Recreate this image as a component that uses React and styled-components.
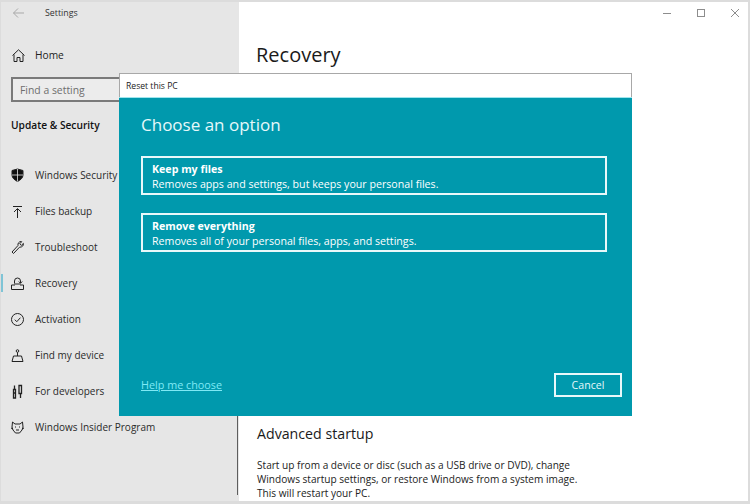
import React from "react";
import styled, { createGlobalStyle } from "styled-components";

const Global = createGlobalStyle`
  html, body { margin: 0; padding: 0; background: #fff; }
  body { font-family: "Open Sans", "Noto Sans", sans-serif; color: #1a1a1a; }
  #root { width: 750px; height: 504px; }
`;

const Frame = styled.div`
  position: relative;
  width: 750px;
  height: 504px;
  box-sizing: border-box;
  border: solid #dcdcdc;
  border-width: 2px 2px 3px 1px;
  display: flex;
  overflow: hidden;
  background: #fff;
`;
const Sidebar = styled.aside`
  position: relative;
  width: 238px;
  background: #e6e6e6;
  display: flex;
  flex-direction: column;
  flex: none;
`;
const TitleRow = styled.div`
  height: 21px;
  display: flex;
  align-items: center;
  padding-left: 11px;
  gap: 20px;
  font-size: 8.8px;
  color: #333;
`;
const BackIcon = styled.svg`
  width: 13px;
  height: 12px;
  fill: none;
  stroke: #a9a9a9;
  stroke-width: 1;
`;
const HomeRow = styled.div`
  margin-top: 21px;
  height: 22px;
  display: flex;
  align-items: center;
  padding-left: 10px;
  gap: 9px;
  font-size: 10.2px;
  color: #222;
`;
const Search = styled.div`
  margin: 11px 0 0 10px;
  width: 170px;
  height: 25px;
  box-sizing: border-box;
  border: 2px solid #7a7a7a;
  background: #ececec;
  padding-left: 7px;
  display: flex;
  align-items: center;
  font-size: 10.4px;
  color: #6e6e6e;
`;
const Section = styled.div`
  margin: 14px 0 0 10px;
  font-size: 10.2px;
  font-weight: 600;
  color: #111;
  line-height: 18px;
`;
const Nav = styled.nav`
  margin-top: 23px;
  display: flex;
  flex-direction: column;
`;
const NavRow = styled.div`
  position: relative;
  height: 36px;
  display: flex;
  align-items: center;
  padding-left: 9px;
  gap: 10px;
  font-size: 10px;
  color: #2a2a2a;
  white-space: nowrap;
  ${(p) =>
    p.$active &&
    `&::before { content: ""; position: absolute; left: 0; top: 9px; width: 2px; height: 18px; background: #7fc4d6; }`}
`;
const Icon = styled.svg`
  width: 15px;
  height: 15px;
  flex: none;
  fill: none;
  stroke: #222;
  stroke-width: 1;
`;
const ScrollLine = styled.div`
  position: absolute;
  right: 1px;
  top: 74px;
  bottom: 6px;
  width: 1px;
  background: #5e5e5e;
`;
const Main = styled.main`
  flex: 1;
  display: flex;
  flex-direction: column;
  padding-left: 18px;
  min-width: 0;
`;
const WinControls = styled.div`
  height: 22px;
  display: flex;
  align-items: center;
  justify-content: flex-end;
  gap: 24px;
  padding-right: 8px;
`;
const CtlIcon = styled.svg`
  width: 10px;
  height: 10px;
  fill: none;
  stroke: #8d8d8d;
  stroke-width: 1;
`;
const PageTitle = styled.h1`
  margin: 16px 0 0 -1px;
  font-size: 20px;
  font-weight: 400;
  line-height: 30px;
  color: #1a1a1a;
`;
const SubHead = styled.h2`
  margin: 354px 0 0;
  font-size: 14.2px;
  font-weight: 400;
  line-height: 20px;
  color: #1a1a1a;
`;
const Body = styled.p`
  margin: 14px 0 0;
  font-size: 10.1px;
  line-height: 14px;
  color: #222;
  width: 340px;
`;
const Dialog = styled.section`
  position: absolute;
  left: 118px;
  top: 71px;
  width: 513px;
  height: 343px;
  box-sizing: border-box;
  display: flex;
  flex-direction: column;
`;
const DialogBar = styled.header`
  height: 24px;
  box-sizing: border-box;
  background: #fff;
  border: solid #a8a8a8;
  border-width: 1px 1px 0 1px;
  padding-left: 6px;
  display: flex;
  align-items: center;
  font-size: 8.6px;
  color: #1a1a1a;
`;
const DialogBody = styled.div`
  flex: 1;
  background: #0099ad;
  border-top: 1px solid #9fe6ee;
  display: flex;
  flex-direction: column;
  padding: 12px 10px 19px 22px;
  color: #fff;
`;
const DialogTitle = styled.h2`
  margin: 0 0 16px;
  font-size: 17px;
  font-weight: 400;
  line-height: 30px;
  color: #e6f8fa;
`;
const Options = styled.div`
  display: flex;
  flex-direction: column;
  gap: 18px;
`;
const Option = styled.button`
  all: unset;
  box-sizing: border-box;
  width: 466px;
  height: 39px;
  border: 2px solid #e8f8fa;
  padding: 1px 0 0 9px;
  display: block;
  font-size: 10.65px;
  line-height: 14px;
  color: #fff;
`;
const OptionTitle = styled.div`
  font-weight: 700;
  line-height: 15px;
`;
const Footer = styled.div`
  margin-top: auto;
  display: flex;
  align-items: center;
  justify-content: space-between;
`;
const Help = styled.a`
  font-size: 10.8px;
  line-height: 14px;
  color: #7fe9f5;
  text-decoration: underline;
`;
const Cancel = styled.button`
  all: unset;
  box-sizing: border-box;
  width: 68px;
  height: 24px;
  border: 2px solid #e8f8fa;
  text-align: center;
  font-size: 10.6px;
  line-height: 20px;
  color: #e6f8fa;
`;

const items = [
  ["Windows Security", <><path key="a" d="M7.5 1 2 2.5V7c0 3 2.5 5 5.5 6.5C10.500 12 13 10 13 7V2.5Z" fill="#111" /><path key="b" d="M7.5 1v12.5M2 7h11" stroke="#e6e6e6" strokeWidth=".8" /></>],
  ["Files backup", <path key="a" d="M3 2.5h9M7.5 14V5M4 8l3.5-3.500L11 8" />],
  ["Troubleshoot", <path key="a" d="M3.5 13.5 2 12l6-6.500C7.5 3.5 9 1.5 11 1.5l.7.2-2 2.100 1.600 1.600 2.100-2c.4 2-1.200 4-3.900 3.800Z" />],
  ["Recovery", <path key="a" d="M5 9H1.500v4.500h12V9H10M4.500 7.500V5a3 3 0 0 1 6 0v2M4.500 8h6M8.800 5.500l1.700 1.800 1.700-1.800" />],
  ["Activation", <><circle key="a" cx="7.5" cy="7.5" r="6" /><path key="b" d="m4.800 7.700 2 2 3.600-4" /></>],
  ["Find my device", <><circle key="a" cx="7.5" cy="3" r="1.300" /><path key="b" d="M7.5 4.300V8M2 13.500 3.500 8h8l1.500 5.500Z" /></>],
  ["For developers", <path key="a" d="M4.500 1.500v4M3.500 5.500h2v8.500h-2ZM10 1.500H9v8h2.500v-8ZM10.500 9.500v4.500M3.500 9h2" strokeWidth="1.300" />],
  ["Windows Insider Program", <path key="a" d="M2.500 2 5 4h5l2.500-2 .5 5-1 3-2.500 3h-4L3 10 2 7ZM5 7h1M9 7h1M6 10h3M1 8l2 1M14 8l-2 1" />],
];

export default function App() {
  return (
    <>
      <Global />
      <Frame>
        <Sidebar>
          <TitleRow>
            <BackIcon viewBox="0 0 13 12"><path d="M12 6H1.500M6 1.500 1.500 6 6 10.500" /></BackIcon>
            <span>Settings</span>
          </TitleRow>
          <HomeRow>
            <Icon viewBox="0 0 15 15"><path d="M1.500 7.500 7.500 1.800l6 5.700M3 6.500v7h3v-4h3v4h3v-7" /></Icon>
            <span>Home</span>
          </HomeRow>
          <Search>Find a setting</Search>
          <Section>Update &amp; Security</Section>
          <Nav>
            {items.map(([label, glyph]) => (
              <NavRow key={label} $active={label === "Recovery"}>
                <Icon viewBox="0 0 15 15">{glyph}</Icon>
                <span>{label}</span>
              </NavRow>
            ))}
          </Nav>
          <ScrollLine />
        </Sidebar>
        <Main>
          <WinControls>
            <CtlIcon viewBox="0 0 10 10"><path d="M1 5.500h8" /></CtlIcon>
            <CtlIcon viewBox="0 0 10 10"><rect x="1.500" y="1.500" width="7" height="7" /></CtlIcon>
            <CtlIcon viewBox="0 0 10 10"><path d="m1 1 8 8M9 1 1 9" /></CtlIcon>
          </WinControls>
          <PageTitle>Recovery</PageTitle>
          <SubHead>Advanced startup</SubHead>
          <Body>
            Start up from a device or disc (such as a USB drive or DVD), change Windows startup settings, or restore Windows from a system image. This will restart your PC.
          </Body>
        </Main>
        <Dialog>
          <DialogBar>Reset this PC</DialogBar>
          <DialogBody>
            <DialogTitle>Choose an option</DialogTitle>
            <Options>
              <Option>
                <OptionTitle>Keep my files</OptionTitle>
                Removes apps and settings, but keeps your personal files.
              </Option>
              <Option>
                <OptionTitle>Remove everything</OptionTitle>
                Removes all of your personal files, apps, and settings.
              </Option>
            </Options>
            <Footer>
              <Help href="#">Help me choose</Help>
              <Cancel>Cancel</Cancel>
            </Footer>
          </DialogBody>
        </Dialog>
      </Frame>
    </>
  );
}
